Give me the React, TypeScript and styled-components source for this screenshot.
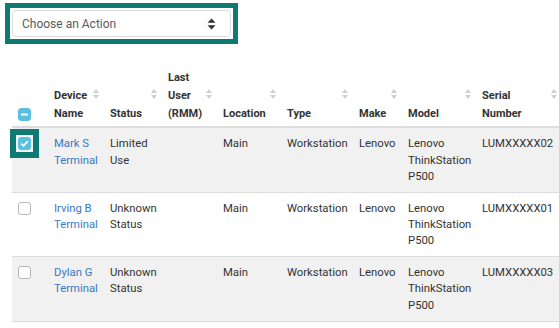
import styled, { createGlobalStyle } from "styled-components"

const GlobalStyle = createGlobalStyle`
  html, body {
    margin: 0;
    padding: 0;
    background: #fff;
    overflow: hidden;
  }
  body {
    font-family: Roboto, "Liberation Sans", sans-serif;
    color: #333;
  }
`

const Page = styled.div`
  padding: 3px 0 0 5px;
  width: 620px;
`

const FocusFrame = styled.div`
  display: inline-block;
  border: 5px solid #0f7a73;
  padding: 2px;
  background: #fff;
`

const ActionSelect = styled.div`
  width: 219px;
  height: 27px;
  box-sizing: border-box;
  border: 1px solid #dcdcdc;
  border-radius: 4px;
  background: #fff;
  display: flex;
  align-items: center;
  justify-content: space-between;
  padding: 0 14px 0 9px;
  font-size: 12px;
  color: #5a5a5a;
`

const Table = styled.table`
  margin: 16px 0 0 7px;
  border-collapse: collapse;
  table-layout: fixed;
  width: 549px;
  font-size: 11.3px;
`

const HeadCell = styled.th<{ $w: number }>`
  position: relative;
  width: ${(p) => p.$w}px;
  box-sizing: border-box;
  text-align: left;
  vertical-align: bottom;
  font-weight: 700;
  font-size: 11px;
  line-height: 17.8px;
  padding: 9px 6px 4px 7px;
  border-bottom: 2px solid #dcdcdc;
  color: #333;
`

const SortIcon = styled.svg`
  position: absolute;
  right: 4px;
  top: 50%;
  margin-top: -4px;
`

const Row = styled.tr<{ $striped: boolean }>`
  background: ${(p) => (p.$striped ? "#f1f1f1" : "#fff")};
  border-bottom: 1px solid #dcdcdc;
`

const Cell = styled.td`
  vertical-align: top;
  line-height: 16.3px;
  padding: 8px 6px 6.5px 7px;
  color: #333;
`

const CheckCell = styled.td`
  vertical-align: top;
  padding: 1px 0 0 0;
`

const DeviceLink = styled.a`
  color: #3a78c2;
  text-decoration: none;
`

const CheckFrame = styled.div<{ $focus: boolean }>`
  display: inline-flex;
  width: 29px;
  height: 29px;
  box-sizing: border-box;
  align-items: center;
  justify-content: center;
  margin-left: -2px;
  background: ${(p) => (p.$focus ? "#0f7a73" : "transparent")};
`

const CheckRing = styled.div<{ $focus: boolean }>`
  display: flex;
  align-items: center;
  justify-content: center;
  width: 17px;
  height: 17px;
  background: ${(p) => (p.$focus ? "#f4f4f4" : "transparent")};
`

const CheckBox = styled.span<{ $on: boolean }>`
  display: flex;
  align-items: center;
  justify-content: center;
  width: 13px;
  height: 13px;
  box-sizing: border-box;
  border-radius: 3px;
  background: ${(p) => (p.$on ? "#5bc0de" : "#fff")};
  border: 1px solid ${(p) => (p.$on ? "#5bc0de" : "#b8b8b8")};
`

const HeadCheck = styled.div`
  margin-bottom: 1px;
`

const Sort = () => (
  <SortIcon width="6" height="10" viewBox="0 0 6 10">
    <path d="M3 0 L6 4 L0 4 Z" fill="#cfcfcf" />
    <path d="M3 10 L6 6 L0 6 Z" fill="#cfcfcf" />
  </SortIcon>
)

const columns = [
  { label: ["Device", "Name"], w: 56 },
  { label: ["Status"], w: 58 },
  { label: ["Last", "User", "(RMM)"], w: 55 },
  { label: ["Location"], w: 64 },
  { label: ["Type"], w: 72 },
  { label: ["Make"], w: 49 },
  { label: ["Model"], w: 74 },
  { label: ["Serial", "Number"], w: 86 },
]

const devices = [
  { name: ["Mark S", "Terminal"], status: ["Limited", "Use"], serial: "LUMXXXXX02", checked: true },
  { name: ["Irving B", "Terminal"], status: ["Unknown", "Status"], serial: "LUMXXXXX01", checked: false },
  { name: ["Dylan G", "Terminal"], status: ["Unknown", "Status"], serial: "LUMXXXXX03", checked: false },
]

const lines = (parts: string[]) =>
  parts.map((t, i) => (
    <span key={i}>
      {i > 0 && <br />}
      {t}
    </span>
  ))

export default function App() {
  return (
    <>
      <GlobalStyle />
      <Page>
        <FocusFrame>
          <ActionSelect>
            <span>Choose an Action</span>
            <svg width="9" height="12" viewBox="0 0 9 12">
              <path d="M4.5 0.5 L8.5 4.8 L0.5 4.8 Z" fill="#333" />
              <path d="M4.5 11.5 L8.5 7.2 L0.5 7.2 Z" fill="#333" />
            </svg>
          </ActionSelect>
        </FocusFrame>
        <Table>
          <thead>
            <tr>
              <HeadCell $w={35} style={{ paddingLeft: 6 }}>
                <HeadCheck>
                  <CheckBox $on>
                    <svg width="9" height="9" viewBox="0 0 9 9">
                      <rect x="1" y="3.5" width="7" height="2" fill="#fff" />
                    </svg>
                  </CheckBox>
                </HeadCheck>
              </HeadCell>
              {columns.map((c) => (
                <HeadCell key={c.label.join(" ")} $w={c.w}>
                  {lines(c.label)}
                  <Sort />
                </HeadCell>
              ))}
            </tr>
          </thead>
          <tbody>
            {devices.map((d, i) => (
              <Row key={d.serial} $striped={i % 2 === 0}>
                <CheckCell>
                  <CheckFrame $focus={d.checked}>
                    <CheckRing $focus={d.checked}>
                      <CheckBox $on={d.checked}>
                        {d.checked && (
                          <svg width="9" height="9" viewBox="0 0 9 9">
                            <path
                              d="M1.3 4.6 L3.6 6.8 L7.8 2.2"
                              stroke="#fff"
                              strokeWidth="1.8"
                              fill="none"
                            />
                          </svg>
                        )}
                      </CheckBox>
                    </CheckRing>
                  </CheckFrame>
                </CheckCell>
                <Cell>
                  <DeviceLink href="#">{lines(d.name)}</DeviceLink>
                </Cell>
                <Cell>{lines(d.status)}</Cell>
                <Cell></Cell>
                <Cell>Main</Cell>
                <Cell>Workstation</Cell>
                <Cell>Lenovo</Cell>
                <Cell>{lines(["Lenovo", "ThinkStation", "P500"])}</Cell>
                <Cell>{d.serial}</Cell>
              </Row>
            ))}
          </tbody>
        </Table>
      </Page>
    </>
  )
}
